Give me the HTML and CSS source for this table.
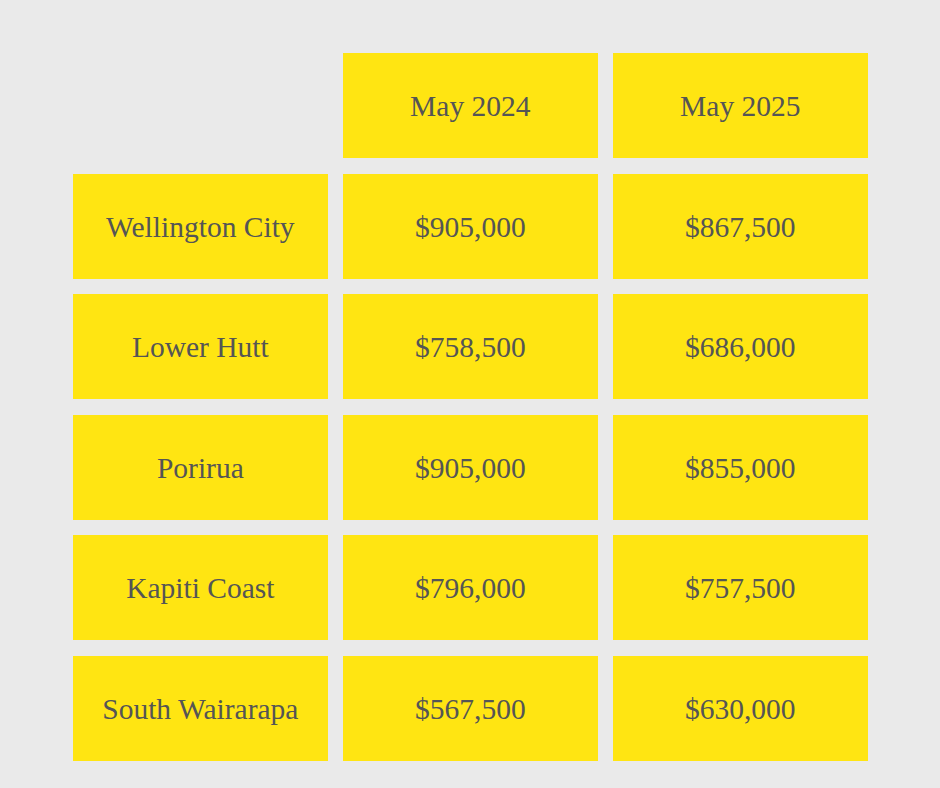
FILE: index.html
```html
<!DOCTYPE html>
<html>
<head>
<meta charset="utf-8">
<link rel="stylesheet" href="styles.css">
</head>
<body>
<div class="table">
  <div class="blank"></div>
  <div class="cell">May 2024</div>
  <div class="cell">May 2025</div>

  <div class="cell">Wellington City</div>
  <div class="cell">$905,000</div>
  <div class="cell">$867,500</div>

  <div class="cell">Lower Hutt</div>
  <div class="cell">$758,500</div>
  <div class="cell">$686,000</div>

  <div class="cell">Porirua</div>
  <div class="cell">$905,000</div>
  <div class="cell">$855,000</div>

  <div class="cell">Kapiti Coast</div>
  <div class="cell">$796,000</div>
  <div class="cell">$757,500</div>

  <div class="cell">South Wairarapa</div>
  <div class="cell">$567,500</div>
  <div class="cell">$630,000</div>
</div>
</body>
</html>
```
FILE: styles.css
```css
html, body {
  margin: 0;
  padding: 0;
}
body {
  width: 940px;
  height: 788px;
  background: #eaeaea;
  font-family: "Liberation Serif", "DejaVu Serif", serif;
  overflow: hidden;
}
.table {
  display: grid;
  grid-template-columns: repeat(3, 254.67px);
  grid-auto-rows: 105px;
  column-gap: 15.33px;
  row-gap: 15.6px;
  padding: 53px 0 0 73px;
}
.cell {
  background: #ffe512;
  color: #555555;
  font-size: 29.5px;
  display: flex;
  align-items: center;
  justify-content: center;
  padding-top: 2px;
  box-sizing: border-box;
}
```
